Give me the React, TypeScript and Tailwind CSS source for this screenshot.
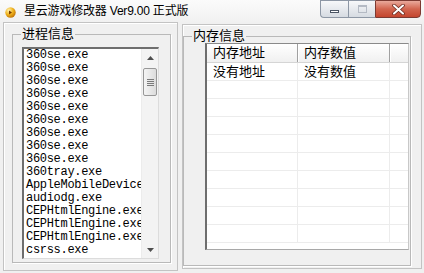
import React from "react";

const procs = [
  ...Array(9).fill("360se.exe"),
  "360tray.exe",
  "AppleMobileDevice",
  "audiodg.exe",
  "CEPHtmlEngine.exe",
  "CEPHtmlEngine.exe",
  "CEPHtmlEngine.exe",
  "csrss.exe",
];

const ui = "font-['Liberation_Sans','Noto_Sans_CJK_SC',sans-serif]";

const AppIcon = () => (
  <svg width="11" height="11" viewBox="0 0 11 11">
    <defs>
      <radialGradient id="ball" cx="0.35" cy="0.3" r="0.8">
        <stop offset="0" stopColor="#fff3b0" />
        <stop offset="0.5" stopColor="#f0b21c" />
        <stop offset="1" stopColor="#b86a05" />
      </radialGradient>
    </defs>
    <circle cx="5.5" cy="5.5" r="5.2" fill="url(#ball)" />
    <path d="M4 3.5 L7 5.5 L4 7.5 Z" fill="#7a3a00" />
  </svg>
);

const WinButtons = () => (
  <div className="flex h-[18px] mr-[3px]">
    <div className="w-[28px] h-full border border-[#8d97a5] border-r-0 rounded-bl-[4px] bg-gradient-to-b from-[#f7f8fa] to-[#d6dbe2] flex items-center justify-center">
      <div className="w-[9px] h-[3px] mt-[5px] border border-[#4b5564] bg-white" />
    </div>
    <div className="w-[27px] h-full border border-[#8d97a5] border-r-0 bg-gradient-to-b from-[#f7f8fa] to-[#d6dbe2] flex items-center justify-center">
      <div className="w-[9px] h-[8px] border border-[#b4bac4] border-t-2" />
    </div>
    <div className="w-[46px] h-full border border-[#7c3a32] rounded-br-[4px] bg-gradient-to-b from-[#e9a99c] via-[#d2654f] to-[#c4452e] flex items-center justify-center">
      <svg width="13" height="11" viewBox="0 0 13 11">
        <path d="M2 1.5 L11 9.5 M11 1.5 L2 9.5" stroke="#6b2a20" strokeWidth="3.6" strokeLinecap="round" />
        <path d="M2 1.5 L11 9.5 M11 1.5 L2 9.5" stroke="#ffffff" strokeWidth="2" strokeLinecap="round" />
      </svg>
    </div>
  </div>
);

const Arrow = ({ up }: { up?: boolean }) => (
  <svg width="7" height="4" viewBox="0 0 7 4">
    <path d={up ? "M0 4 L3.5 0 L7 4 Z" : "M0 0 L3.5 4 L7 0 Z"} fill="#4d4d4d" />
  </svg>
);

const ScrollBar = () => (
  <div className="w-[17px] h-full flex flex-col bg-[#f3f3f3] border-l border-[#ececec]">
    <div className="h-[17px] flex items-center justify-center">
      <Arrow up />
    </div>
    <div className="mt-[2px] mx-[1px] h-[28px] rounded-[2px] border border-[#979797] bg-gradient-to-r from-[#f4f4f4] to-[#dcdcdc] flex flex-col items-center justify-center gap-[1px]">
      <div className="w-[7px] h-[1px] bg-[#7a7a7a]" />
      <div className="w-[7px] h-[1px] bg-[#7a7a7a]" />
      <div className="w-[7px] h-[1px] bg-[#7a7a7a]" />
      <div className="w-[7px] h-[1px] bg-[#7a7a7a]" />
    </div>
    <div className="flex-1" />
    <div className="h-[17px] flex items-center justify-center">
      <Arrow />
    </div>
  </div>
);

export default function App() {
  const rows = Array.from({ length: 10 });
  return (
    <div className={`w-[424px] h-[273px] bg-[#f0f0f0] overflow-hidden flex flex-col ${ui}`}>
      {/* title bar */}
      <div className="h-[22px] flex items-start bg-gradient-to-b from-[#fbfbfb] to-[#f1f1f1]">
        <div className="ml-[5px] mt-[7px]">
          <AppIcon />
        </div>
        <div className="ml-[8px] mt-[3px] text-[12px] leading-[16px] text-black tracking-[-0.2px]">
          星云游戏修改器 Ver9.00 正式版
        </div>
        <div className="flex-1" />
        <WinButtons />
      </div>

      <div className="flex items-start pl-[3px] gap-[4px]">
        {/* left panel */}
        <div className="w-[175px] h-[249px] border border-[#c3c3c3] shadow-[inset_1px_1px_0_#ffffff] pl-[8px] pt-[4px]">
          <fieldset className="w-[159px] h-[236px] border border-[#b9b9b9] shadow-[1px_1px_0_#ffffff]">
            <legend className="ml-[8px] px-[1px] text-[13px] leading-[14px] text-black">进程信息</legend>
            <div className="ml-[9px] mt-[6px] w-[137px] h-[212px] bg-white border-t-2 border-l-2 border-t-[#6e6e6e] border-l-[#6e6e6e] border-r border-b border-r-[#dcdcdc] border-b-[#dcdcdc] flex">
              <div className="flex-1 overflow-hidden pl-[2px] font-['Liberation_Mono',monospace] text-[12px] leading-[13px] tracking-[-0.3px] text-black whitespace-nowrap">
                {procs.map((p, i) => (
                  <div key={i} className="h-[13px]">
                    {p}
                  </div>
                ))}
              </div>
              <ScrollBar />
            </div>
          </fieldset>
        </div>

        {/* right panel */}
        <div className="mt-[2px] w-[240px] h-[245px] border border-[#c3c3c3] shadow-[inset_1px_1px_0_#ffffff] pt-[4px]">
          <fieldset className="w-[228px] h-[237px] border border-[#b9b9b9] shadow-[1px_1px_0_#ffffff]">
            <legend className="ml-[8px] px-[1px] text-[13px] leading-[14px] text-black">内存信息</legend>
            <div className="ml-[21px] w-[204px] h-[207px] bg-white border-t border-l-2 border-t-[#8a8a8a] border-l-[#6e6e6e] border-r border-b border-r-[#c8c8c8] border-b-[#a8a8a8] overflow-hidden text-[13px] text-black">
              <div className="h-[19px] flex bg-gradient-to-b from-[#ffffff] to-[#f0f0f0] border-b border-[#d5d5d5] leading-[17px]">
                <div className="w-[91px] pl-[6px] border-r border-[#a0a0a0] shadow-[1px_0_0_#ffffff]">内存地址</div>
                <div className="w-[92px] pl-[6px] border-r border-[#a0a0a0] shadow-[1px_0_0_#ffffff]">内存数值</div>
                <div className="flex-1" />
              </div>
              {rows.map((_, i) => (
                <div key={i} className="h-[18px] flex border-b border-[#ececec] leading-[17px]">
                  <div className="w-[91px] pl-[6px] border-r border-[#ececec]">{i === 0 ? "没有地址" : ""}</div>
                  <div className="w-[92px] pl-[6px] border-r border-[#ececec]">{i === 0 ? "没有数值" : ""}</div>
                  <div className="flex-1" />
                </div>
              ))}
            </div>
          </fieldset>
        </div>
      </div>
    </div>
  );
}
